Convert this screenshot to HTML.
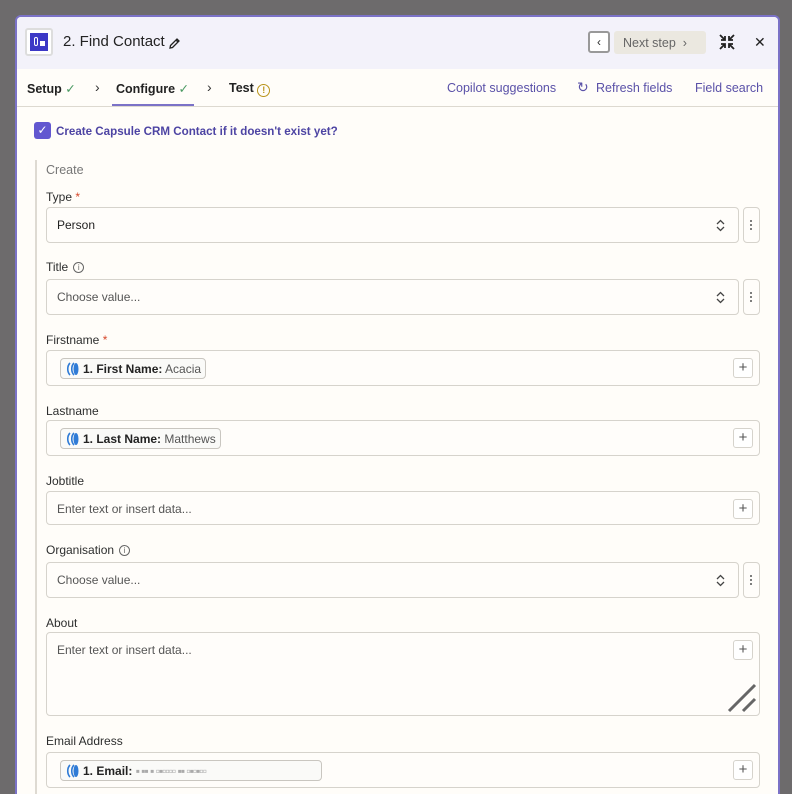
<!DOCTYPE html>
<html style="width:792px;height:794px;overflow:hidden"><head><meta charset="utf-8"><style>
*{box-sizing:border-box;margin:0;padding:0}
body{width:792px;height:794px;background:#6d6b6c;font-family:"Liberation Sans",sans-serif;position:relative;overflow:hidden;color:#2d2e2e}
.panel{position:absolute;left:15px;top:15px;width:765px;height:779px;background:#fffdf9;border:2px solid #7b72c7;border-bottom:none;border-radius:6px 6px 0 0;overflow:hidden}
.hdr{position:absolute;left:0;top:0;right:0;height:52px;background:#f3f2fa}
.abs{position:absolute}
.lbl{position:absolute;left:29px;font-size:12px;color:#2d2e2e}
.star{color:#d6472a}
.f{position:absolute;left:29px;width:714px;height:36px;border:1px solid #d6d3cc;border-radius:4px;background:#fffdfa}
.fs{width:693px}
.dots{position:absolute;left:726px;width:17px;height:36px;border:1px solid #d6d3cc;border-radius:4px;background:#fffdfa}
.dots i{position:absolute;left:6px;width:2px;height:2px;background:#555;border-radius:1px}
.ph{position:absolute;left:10px;top:10px;font-size:12px;color:#555}
.chev{position:absolute;right:13px;top:11px}
.plus{position:absolute;right:6px;top:7px;width:20px;height:20px;border:1px solid #d6d3cc;border-radius:3px;font-size:15px;color:#555;text-align:center;line-height:18px;background:#fff}
.pill{position:absolute;left:13px;top:7px;height:21px;border:1px solid #c9c6c0;border-radius:4px;background:#fafaf8;font-size:12px;padding:3px 4px 0 22px;white-space:nowrap}
.pill b{font-weight:bold;color:#222}
.pill span{color:#555}
.logo{position:absolute;left:4px;top:3px;width:15px;height:14px}
.info{display:inline-block;width:11px;height:11px;border:1px solid #666;border-radius:50%;font-size:8px;line-height:9px;text-align:center;color:#666;margin-left:5px;vertical-align:1px}
</style></head><body>
<div class="panel">
 <div class="hdr"></div>
 <div class="abs" style="left:8px;top:11px;width:28px;height:28px;border:2px solid #ddd;border-radius:3px;background:#fff"></div>
 <div class="abs" style="left:13px;top:16px;width:18px;height:18px;background:#3c38c6"></div>
 <div class="abs" style="left:17px;top:20px;width:4px;height:9px;border:1px solid #fff;border-radius:2px"></div>
 <div class="abs" style="left:23px;top:24px;width:5px;height:5px;background:#fff"></div>
 <div class="abs" style="left:46px;top:16px;font-size:15px;color:#222">2. Find Contact</div>
 <svg class="abs" style="left:151px;top:20px" width="13" height="13" viewBox="0 0 13 13"><path d="M2 11L2.5 8.5L9 2L11 4L4.5 10.5Z M8 3L10 5" stroke="#222" stroke-width="1.3" fill="none"/></svg>
 <div class="abs" style="left:571px;top:14px;width:22px;height:22px;border:2px solid #999;border-radius:3px;background:#fff;text-align:center;font-size:12px;line-height:18px">&lsaquo;</div>
 <div class="abs" style="left:597px;top:14px;width:92px;height:23px;background:#ebe8e0;border-radius:3px;font-size:12.5px;color:#666;padding:5px 0 0 9px">Next step &nbsp;&rsaquo;</div>
 <svg class="abs" style="left:702px;top:17px" width="16" height="16" viewBox="0 0 16 16" stroke="#222" stroke-width="1.8" fill="none"><path d="M1 1L6 6M6 2V6H2M15 1L10 6M10 2V6H14M1 15L6 10M6 14V10H2M15 15L10 10M10 14V10H14"/></svg>
 <div class="abs" style="left:737px;top:17px;font-size:14px;color:#222">✕</div>
 <div class="abs" style="left:10px;top:64px;font-size:12.5px;font-weight:bold;color:#222">Setup <span style="color:#4b9a63;font-weight:normal">✓</span></div>
 <div class="abs" style="left:78px;top:62px;font-size:14px;color:#333">›</div>
 <div class="abs" style="left:99px;top:64px;font-size:12.5px;font-weight:bold;color:#222">Configure <span style="color:#4b9a63;font-weight:normal">✓</span></div>
 <div class="abs" style="left:95px;top:87px;width:82px;height:2px;background:#7b72c7"></div>
 <div class="abs" style="left:190px;top:62px;font-size:14px;color:#333">›</div>
 <div class="abs" style="left:212px;top:64px;font-size:12.5px;font-weight:bold;color:#222">Test <span style="display:inline-block;width:13px;height:13px;border:1.5px solid #b9941a;border-radius:50%;color:#b9941a;font-size:9px;text-align:center;line-height:10px;vertical-align:-1px">!</span></div>
 <div class="abs" style="left:430px;top:64px;font-size:12.5px;color:#5a51a8">Copilot suggestions</div>
 <div class="abs" style="left:560px;top:62px;font-size:14px;color:#5a51a8">↻</div>
 <div class="abs" style="left:579px;top:64px;font-size:12.5px;color:#5a51a8">Refresh fields</div>
 <div class="abs" style="left:678px;top:64px;font-size:12.5px;color:#5a51a8">Field search</div>
 <div class="abs" style="left:0;top:89px;right:0;height:1px;background:#ddd9d0"></div>
 <div class="abs" style="left:17px;top:105px;width:17px;height:17px;background:#6257d0;border-radius:3px;color:#fff;font-size:12px;text-align:center;line-height:17px">✓</div>
 <div class="abs" style="left:39px;top:108px;font-size:11.6px;font-weight:bold;color:#4d44a3">Create Capsule CRM Contact if it doesn't exist yet?</div>
 <div class="abs" style="left:18px;top:143px;width:2px;height:636px;background:#dedad2"></div>
 <div class="lbl" style="top:146px;font-size:12.5px;color:#777">Create</div>
 <div class="lbl" style="top:173px">Type <span class="star">*</span></div>
 <div class="f fs" style="top:190px"><div class="ph" style="color:#222">Person</div><svg class="chev" width="9" height="13" viewBox="0 0 9 13" stroke="#444" stroke-width="1.3" fill="none"><path d="M1 5L4.5 1.5L8 5M1 8L4.5 11.5L8 8"/></svg></div>
 <div class="dots" style="top:190px"><i style="top:12px"></i><i style="top:16px"></i><i style="top:20px"></i></div>
 <div class="lbl" style="top:243px">Title<span class="info">i</span></div>
 <div class="f fs" style="top:262px"><div class="ph">Choose value...</div><svg class="chev" width="9" height="13" viewBox="0 0 9 13" stroke="#444" stroke-width="1.3" fill="none"><path d="M1 5L4.5 1.5L8 5M1 8L4.5 11.5L8 8"/></svg></div>
 <div class="dots" style="top:262px"><i style="top:12px"></i><i style="top:16px"></i><i style="top:20px"></i></div>
 <div class="lbl" style="top:316px">Firstname <span class="star">*</span></div>
 <div class="f" style="top:333px"><div class="pill"><svg class="logo" viewBox="0 0 15 14"><path d="M5 1C2 4 2 10 5 13" stroke="#2f7bd6" stroke-width="1.6" fill="none"/><path d="M9 1C6 4 6 10 9 13" stroke="#2f7bd6" stroke-width="1.6" fill="none"/><ellipse cx="11" cy="7" rx="2.5" ry="6" fill="#2f7bd6"/></svg><b>1. First Name:</b> <span>Acacia</span></div><div class="plus">+</div></div>
 <div class="lbl" style="top:387px">Lastname</div>
 <div class="f" style="top:403px"><div class="pill"><svg class="logo" viewBox="0 0 15 14"><path d="M5 1C2 4 2 10 5 13" stroke="#2f7bd6" stroke-width="1.6" fill="none"/><path d="M9 1C6 4 6 10 9 13" stroke="#2f7bd6" stroke-width="1.6" fill="none"/><ellipse cx="11" cy="7" rx="2.5" ry="6" fill="#2f7bd6"/></svg><b>1. Last Name:</b> <span>Matthews</span></div><div class="plus">+</div></div>
 <div class="lbl" style="top:457px">Jobtitle</div>
 <div class="f" style="top:474px;height:34px"><div class="ph">Enter text or insert data...</div><div class="plus">+</div></div>
 <div class="lbl" style="top:526px">Organisation<span class="info">i</span></div>
 <div class="f fs" style="top:545px"><div class="ph">Choose value...</div><svg class="chev" width="9" height="13" viewBox="0 0 9 13" stroke="#444" stroke-width="1.3" fill="none"><path d="M1 5L4.5 1.5L8 5M1 8L4.5 11.5L8 8"/></svg></div>
 <div class="dots" style="top:545px"><i style="top:12px"></i><i style="top:16px"></i><i style="top:20px"></i></div>
 <div class="lbl" style="top:599px">About</div>
 <div class="f" style="top:615px;height:84px"><div class="ph">Enter text or insert data...</div><div class="plus">+</div>
  <svg class="abs" style="right:2px;bottom:2px" width="30" height="30" viewBox="0 0 30 30"><path d="M2 28L28 2M16 28L28 16" stroke="#666" stroke-width="3"/></svg></div>
 <div class="lbl" style="top:717px">Email Address</div>
 <div class="f" style="top:735px"><div class="pill" style="width:262px"><svg class="logo" viewBox="0 0 15 14"><path d="M5 1C2 4 2 10 5 13" stroke="#2f7bd6" stroke-width="1.6" fill="none"/><path d="M9 1C6 4 6 10 9 13" stroke="#2f7bd6" stroke-width="1.6" fill="none"/><ellipse cx="11" cy="7" rx="2.5" ry="6" fill="#2f7bd6"/></svg><b>1. Email:</b> <span style="color:#aaa;letter-spacing:-1px">▪ ▪▪ ▪ ▫▪▫▫▫▫ ▪▪ ▫▪▫▪▫▫</span></div><div class="plus">+</div></div>
</div>
</body></html>
